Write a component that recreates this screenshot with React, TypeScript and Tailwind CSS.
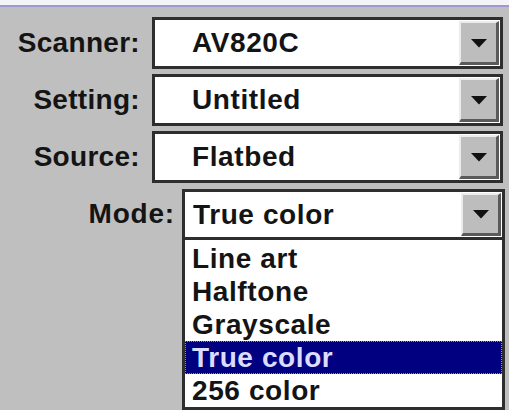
import React from "react";

const Arrow = () => (
  <div className="w-[40px] h-full flex items-center justify-center bg-[#bdbdbd] border-t-2 border-l-2 border-t-[#ececec] border-l-[#ececec] border-r-[3px] border-b-[3px] border-r-[#5a5a5a] border-b-[#5a5a5a]">
    <svg width="18" height="10" viewBox="0 0 18 10">
      <polygon points="1,1 17,1 9,9.5" fill="#111" />
    </svg>
  </div>
);

const Row = ({ label, value, mt }: { label: string; value: string; mt: string }) => (
  <div className={`flex items-center ${mt}`}>
    <div className="w-[142px] text-right pr-[2px] tracking-[0.3px]">{label}</div>
    <div className="ml-[10px] w-[351px] h-[52px] border-[3px] border-[#2e2e2e] bg-white flex items-stretch">
      <div className="flex-1 flex items-center pl-[37px] tracking-[0.6px]">{value}</div>
      <div className="py-[1px] pr-[1px]">
        <Arrow />
      </div>
    </div>
  </div>
);

export default function App() {
  const items = ["Line art", "Halftone", "Grayscale", "True color", "256 color"];
  return (
    <div className="w-[509px] h-[410px] bg-white overflow-hidden font-['Liberation_Sans',Arial,sans-serif] font-bold text-[28px] leading-none text-[#141414]">
      <div className="h-[5px] bg-[#f4f4f8]" />
      <div className="h-[2px] bg-[#9d9ad2]" />
      <div className="h-[403px] bg-[#bfbfbf] pt-[10px]">
        <Row label="Scanner:" value="AV820C" mt="mt-0" />
        <Row label="Setting:" value="Untitled" mt="mt-[5px]" />
        <Row label="Source:" value="Flatbed" mt="mt-[5px]" />
        <div className="flex items-start mt-[6px]">
          <div className="w-[175px] h-[50px] flex items-center justify-end tracking-[0.8px]">Mode:</div>
          <div className="ml-[7px] w-[323px] flex flex-col">
            <div className="h-[51px] border-[3px] border-[#2e2e2e] bg-white flex items-stretch">
              <div className="flex-1 flex items-center pl-[8px] tracking-[0.6px]">True color</div>
              <div className="py-[1px] pr-[1px]">
                <Arrow />
              </div>
            </div>
            <div className="border-x-[3px] border-b-[3px] border-[#2e2e2e] bg-white pt-[2px]">
              {items.map((it) =>
                it === "True color" ? (
                  <div
                    key={it}
                    className="h-[33px] flex items-center pl-[6px] bg-[#000080] text-[#dcdcff] border border-dotted border-[#8a8ae0] tracking-[0.6px]"
                  >
                    {it}
                  </div>
                ) : (
                  <div key={it} className="h-[33px] flex items-center pl-[7px] tracking-[0.6px]">
                    {it}
                  </div>
                )
              )}
            </div>
          </div>
        </div>
      </div>
    </div>
  );
}
